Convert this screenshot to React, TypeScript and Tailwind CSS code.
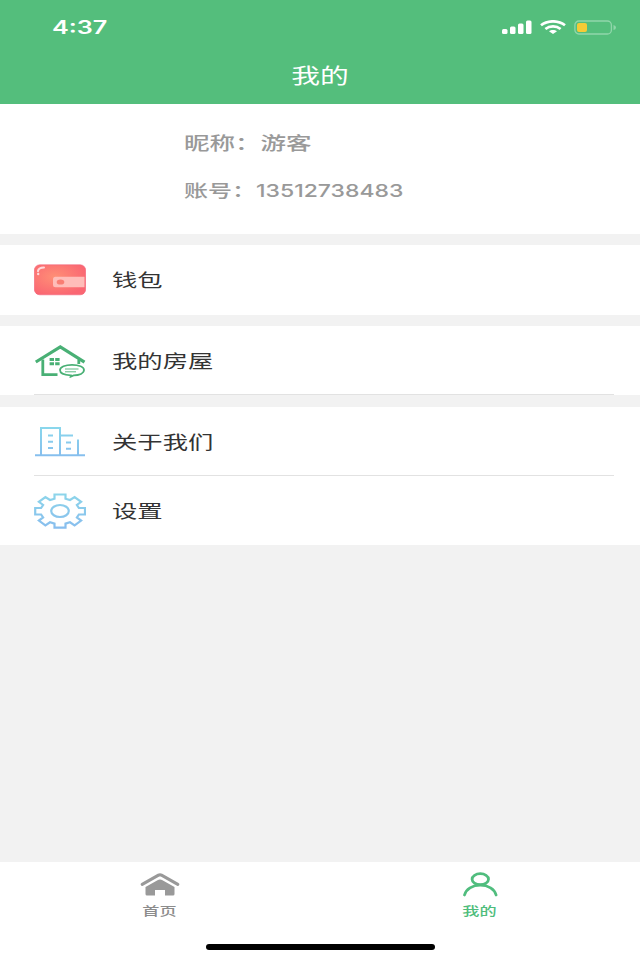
import type { ReactNode } from "react";
import { clsx } from "clsx";

function WalletIcon() {
  return (
    <svg width="52" height="32" viewBox="0 0 52 32" fill="none">
      <defs>
        <radialGradient id="wallet" cx="0.4" cy="0.4" r="0.65">
          <stop offset="0" stopColor="#ff8f76" />
          <stop offset="1" stopColor="#fa6672" />
        </radialGradient>
      </defs>
      <rect x="0.3" y="0.8" width="51.4" height="30" rx="5.5" fill="url(#wallet)" stroke="#f2637a" strokeWidth="0.6" />
      <path d="M50.5 12.8h-29a2.500 2.500 0 0 0-2.500 2.500v5.500a2.500 2.500 0 0 0 2.500 2.500h29z" fill="#ffbdb9" />
      <ellipse cx="26.500" cy="18" rx="3.800" ry="2.600" fill="#f97e74" />
      <path d="M4 7.200Q4.400 3.800 10 3.600" stroke="#ffd9dc" strokeWidth="2" strokeLinecap="round" />
      <circle cx="4.200" cy="10" r="1.200" fill="#ffd9dc" />
    </svg>
  );
}

function HouseIcon() {
  return (
    <svg width="52" height="34" viewBox="0 0 52 34" fill="none" stroke="#49b075">
      <path d="M1.800 18 26.300 3l24.200 15.200" strokeWidth="3.200" />
      <path d="M8.800 15.500v15.200h14.700" strokeWidth="2.800" />
      <path d="M44.800 15.500V20" strokeWidth="2.800" />
      <path
        d="M38 20.800c7 0 12 2.200 12 5.300s-4.600 5.100-10.400 5.300l-3 1.300.2-1.400C30.600 31.100 26 29.200 26 26.100c0-3.100 5.200-5.300 12-5.300z"
        strokeWidth="1.800"
      />
      <path d="M31 25h13.500M31 27.800h11" strokeWidth="0.900" />
      <path d="M15.600 14h4.400v3h-4.400zM21.200 14h4.400v3h-4.400zM15.600 18.200h4.400v3h-4.400zM21.200 18.200h4.400v3h-4.400z" fill="#49b075" stroke="none" />
    </svg>
  );
}

function BuildingIcon() {
  return (
    <svg width="52" height="32" viewBox="0 0 52 32" fill="none" stroke="url(#building)" strokeWidth="2">
      <defs>
        <linearGradient id="building" gradientUnits="userSpaceOnUse" x1="0" y1="0" x2="0" y2="32">
          <stop offset="0" stopColor="#8ad8ec" />
          <stop offset="1" stopColor="#86bdee" />
        </linearGradient>
      </defs>
      <path d="M7 29.500V2h19v27.500M26 9.500h13M44 13.500v16" />
      <path d="M1 29.300h50" />
      <path d="M14 9.500h5M14 15.700h5M14 22h5M32 16.500h5M32 22.800h5" />
    </svg>
  );
}

function GearIcon() {
  return (
    <svg width="52" height="36" viewBox="0 0 52 36" fill="none" stroke="url(#gear)" strokeWidth="2.200">
      <defs>
        <linearGradient id="gear" gradientUnits="userSpaceOnUse" x1="0" y1="0" x2="0" y2="36">
          <stop offset="0" stopColor="#8dd6ea" />
          <stop offset="1" stopColor="#88bdee" />
        </linearGradient>
      </defs>
      <path d="M20.500 1.500h11v4.200l4.500 1.300 4.600-2.900 6.500 4.700-4.200 3.200 2 3H51v6.500h-6.100l-2 3 4.200 3.100-6.500 4.700-4.600-3-4.500 1.300v4.100h-11v-4.100L16 29.300l-4.600 3-6.500-4.700 4.200-3.100-2-3H1.200V15h5.900l2-3-4.200-3.200 6.500-4.700L16 7l4.500-1.300z" />
      <ellipse cx="26" cy="18" rx="8.800" ry="6" />
    </svg>
  );
}

function HomeIcon() {
  return (
    <svg width="40" height="24" viewBox="0 0 40 24" fill="none">
      <path d="M2.200 12.300 18.500 3.200q1.500-.8 3 0l16.300 9.100" stroke="#999" strokeWidth="3.200" strokeLinecap="round" strokeLinejoin="round" />
      <path d="M17.500 8.300q2.500-1.400 5 0L34.500 15v7q0 1.500-1.500 1.500h-8V18H15v5.500H7q-1.500 0-1.500-1.500v-7z" fill="#999" />
    </svg>
  );
}

function UserIcon() {
  return (
    <svg width="36" height="25" viewBox="0 0 36 25" fill="none" stroke="#50bd7e" strokeWidth="2.800">
      <ellipse cx="18.300" cy="7.200" rx="8.200" ry="5.500" />
      <path d="M2.500 23c1.500-6 8-9.800 15.800-9.800s14.300 3.800 15.800 9.800" strokeLinecap="round" />
    </svg>
  );
}

function StatusBar() {
  return (
    <div className="flex h-[54px] items-center justify-between pr-[23px] pl-[52px]">
      <span className="mt-[2px] origin-left scale-x-[1.4] text-[18px] leading-none font-semibold">4:37</span>
      <div className="flex items-center">
        <svg width="30" height="14" viewBox="0 0 30 14" fill="white">
          <rect x="0" y="9" width="5.500" height="5" rx="1.500" />
          <rect x="8" y="6.500" width="5.500" height="7.500" rx="1.500" />
          <rect x="16" y="3.500" width="5.500" height="10.500" rx="1.500" />
          <rect x="24" y="0.500" width="5.500" height="13.500" rx="1.500" />
        </svg>
        <svg className="ml-2" width="26" height="14" viewBox="0 0 26 14" fill="none" stroke="white" strokeWidth="2.700">
          <path d="M1 5.300C7.500 0 18.500 0 25 5.300M5.400 9c4.200-3.400 11-3.400 15.200 0" />
          <path d="M9 11.200c2.200-1.700 5.800-1.700 8 0L13 14z" fill="white" stroke="none" />
        </svg>
        <svg className="ml-2" width="43" height="15" viewBox="0 0 43 15" fill="none">
          <rect x="0.900" y="1" width="36.500" height="13" rx="4" stroke="#90d6aa" strokeWidth="1.300" />
          <rect x="3" y="3" width="10" height="9" rx="2" fill="#f5cb36" />
          <path d="M39.500 5q2.500.5 2.500 2.500t-2.500 2.500z" fill="#90d6aa" />
        </svg>
      </div>
    </div>
  );
}

interface RowProps {
  icon: ReactNode;
  label: string;
  className?: string;
  divider?: boolean;
}

function MenuRow({ icon, label, className, divider }: RowProps) {
  return (
    <div className="bg-white">
      <div className={clsx("flex items-center pl-[34px]", className)}>
        <div className="w-[52px]">{icon}</div>
        <span className="ml-[26px] origin-left scale-x-[1.37] pt-px text-[18.500px] leading-none text-[#333]">
          {label}
        </span>
      </div>
      {divider && <div className="mr-[26px] ml-[34px] h-px bg-[#e2e2e2]" />}
    </div>
  );
}

function Tab({ icon, label, active }: { icon: ReactNode; label: string; active?: boolean }) {
  return (
    <div className="flex flex-1 flex-col items-center pt-[10px]">
      <div className="h-6">{icon}</div>
      <span
        className={clsx(
          "mt-[10px] scale-x-[1.37] text-[12.500px] leading-none font-medium",
          active ? "text-[#4fbd7c]" : "text-[#8c8c8c]",
        )}
      >
        {label}
      </span>
    </div>
  );
}

export default function App() {
  return (
    <div className="flex h-[960px] w-[640px] flex-col overflow-hidden bg-[#f2f2f2] font-[Inter,'Noto_Sans_CJK_SC',sans-serif]">
      <header className="h-[104px] bg-[#54be7c] text-white">
        <StatusBar />
        <h1 className="mt-[11px] origin-center scale-x-[1.37] text-center text-[21px] leading-none">我的</h1>
      </header>

      <section className="h-[130px] bg-white pl-[184px] text-[#999]">
        <div className="flex h-[78px] items-center">
          <span className="origin-left scale-x-[1.38] text-[18.500px] leading-none font-medium">昵称：游客</span>
        </div>
        <div className="flex h-[18px] items-center font-medium">
          <span className="w-[72px] text-[17.500px] leading-none">
            <span className="inline-block origin-left scale-x-[1.37]">账号：</span>
          </span>
          <span className="origin-left scale-x-[1.33] text-[17.300px] leading-none">13512738483</span>
        </div>
      </section>

      <div className="mt-[11px]">
        <MenuRow icon={<WalletIcon />} label="钱包" className="h-[70px]" />
      </div>
      <div className="mt-[11px]">
        <MenuRow icon={<HouseIcon />} label="我的房屋" className="h-[68px] pt-px" divider />
      </div>
      <div className="mt-3">
        <MenuRow icon={<BuildingIcon />} label="关于我们" className="h-[68px] pt-px" divider />
        <MenuRow icon={<GearIcon />} label="设置" className="h-[69px]" />
      </div>

      <nav className="mt-auto h-[98px] bg-white">
        <div className="flex h-[82px]">
          <Tab icon={<HomeIcon />} label="首页" />
          <Tab icon={<UserIcon />} label="我的" active />
        </div>
        <div className="mx-auto h-[6px] w-[229px] rounded-full bg-black" />
      </nav>
    </div>
  );
}
